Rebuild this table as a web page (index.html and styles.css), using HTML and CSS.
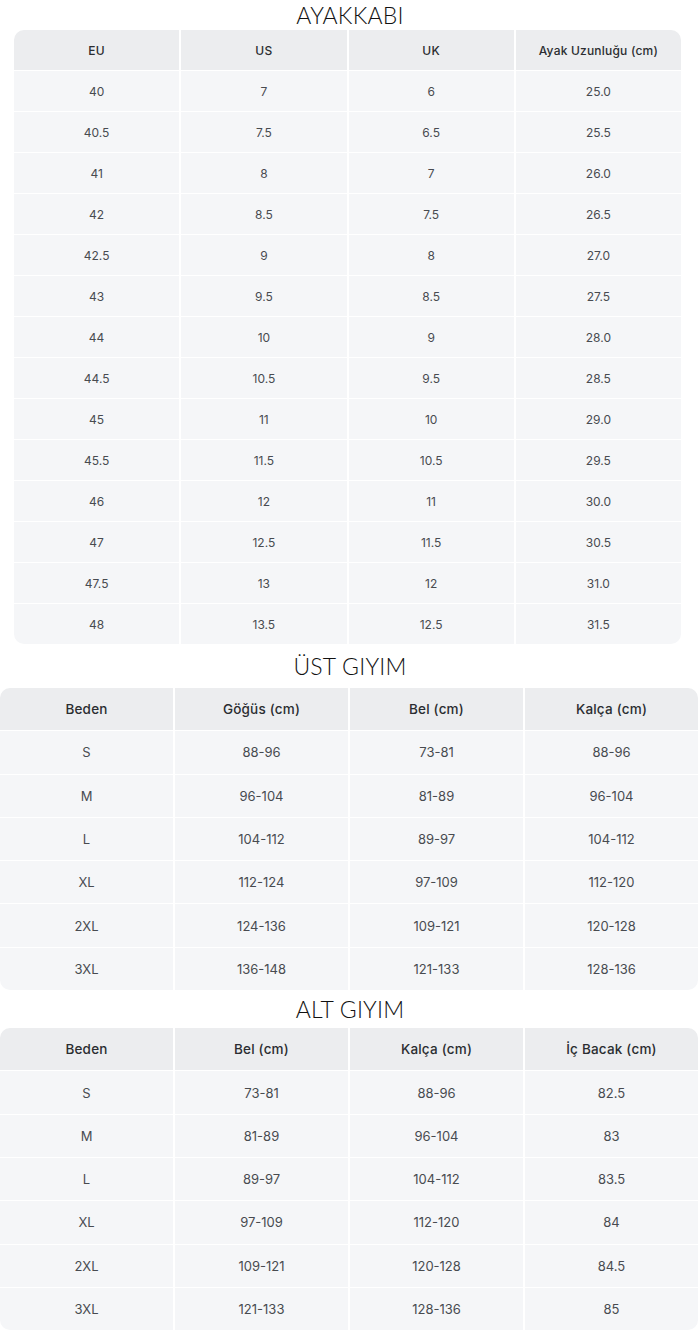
FILE: index.html
```html
<!DOCTYPE html>
<html lang="tr">
<head>
<meta charset="utf-8">
<title>Beden Tablosu</title>
<link rel="stylesheet" href="styles.css">
</head>
<body>
<section class="block block-shoes">
  <h2 class="title title-first">AYAKKABI</h2>
  <div class="grid grid-shoes">
    <div class="cell head">EU</div><div class="cell head">US</div><div class="cell head">UK</div><div class="cell head">Ayak Uzunluğu (cm)</div>
    <div class="cell">40</div><div class="cell">7</div><div class="cell">6</div><div class="cell">25.0</div>
    <div class="cell">40.5</div><div class="cell">7.5</div><div class="cell">6.5</div><div class="cell">25.5</div>
    <div class="cell">41</div><div class="cell">8</div><div class="cell">7</div><div class="cell">26.0</div>
    <div class="cell">42</div><div class="cell">8.5</div><div class="cell">7.5</div><div class="cell">26.5</div>
    <div class="cell">42.5</div><div class="cell">9</div><div class="cell">8</div><div class="cell">27.0</div>
    <div class="cell">43</div><div class="cell">9.5</div><div class="cell">8.5</div><div class="cell">27.5</div>
    <div class="cell">44</div><div class="cell">10</div><div class="cell">9</div><div class="cell">28.0</div>
    <div class="cell">44.5</div><div class="cell">10.5</div><div class="cell">9.5</div><div class="cell">28.5</div>
    <div class="cell">45</div><div class="cell">11</div><div class="cell">10</div><div class="cell">29.0</div>
    <div class="cell">45.5</div><div class="cell">11.5</div><div class="cell">10.5</div><div class="cell">29.5</div>
    <div class="cell">46</div><div class="cell">12</div><div class="cell">11</div><div class="cell">30.0</div>
    <div class="cell">47</div><div class="cell">12.5</div><div class="cell">11.5</div><div class="cell">30.5</div>
    <div class="cell">47.5</div><div class="cell">13</div><div class="cell">12</div><div class="cell">31.0</div>
    <div class="cell">48</div><div class="cell">13.5</div><div class="cell">12.5</div><div class="cell">31.5</div>
  </div>
</section>

<section class="block block-wide">
  <h2 class="title">ÜST GIYIM</h2>
  <div class="grid grid-wide">
    <div class="cell head">Beden</div><div class="cell head">Göğüs (cm)</div><div class="cell head">Bel (cm)</div><div class="cell head">Kalça (cm)</div>
    <div class="cell">S</div><div class="cell">88-96</div><div class="cell">73-81</div><div class="cell">88-96</div>
    <div class="cell">M</div><div class="cell">96-104</div><div class="cell">81-89</div><div class="cell">96-104</div>
    <div class="cell">L</div><div class="cell">104-112</div><div class="cell">89-97</div><div class="cell">104-112</div>
    <div class="cell">XL</div><div class="cell">112-124</div><div class="cell">97-109</div><div class="cell">112-120</div>
    <div class="cell">2XL</div><div class="cell">124-136</div><div class="cell">109-121</div><div class="cell">120-128</div>
    <div class="cell">3XL</div><div class="cell">136-148</div><div class="cell">121-133</div><div class="cell">128-136</div>
  </div>
</section>

<section class="block block-wide">
  <h2 class="title title-last">ALT GIYIM</h2>
  <div class="grid grid-wide">
    <div class="cell head">Beden</div><div class="cell head">Bel (cm)</div><div class="cell head">Kalça (cm)</div><div class="cell head">İç Bacak (cm)</div>
    <div class="cell">S</div><div class="cell">73-81</div><div class="cell">88-96</div><div class="cell">82.5</div>
    <div class="cell">M</div><div class="cell">81-89</div><div class="cell">96-104</div><div class="cell">83</div>
    <div class="cell">L</div><div class="cell">89-97</div><div class="cell">104-112</div><div class="cell">83.5</div>
    <div class="cell">XL</div><div class="cell">97-109</div><div class="cell">112-120</div><div class="cell">84</div>
    <div class="cell">2XL</div><div class="cell">109-121</div><div class="cell">120-128</div><div class="cell">84.5</div>
    <div class="cell">3XL</div><div class="cell">121-133</div><div class="cell">128-136</div><div class="cell">85</div>
  </div>
</section>
</body>
</html>
```

FILE: styles.css
```css
html, body {
  margin: 0;
  padding: 0;
  background: #ffffff;
}

body {
  width: 700px;
  font-family: "Inter", "Noto Sans", "Liberation Sans", sans-serif;
  color: #3f4247;
}

.block {
  display: flex;
  flex-direction: column;
}

.title {
  margin: 0;
  height: 44px;
  display: flex;
  align-items: center;
  justify-content: center;
  font-family: "Lato", "Open Sans", sans-serif;
  font-weight: 300;
  font-size: 23px;
  letter-spacing: 0.2px;
  color: #111111;
}

.title-first {
  height: 30px;
}

.title-last {
  height: 38px;
}

.grid {
  display: grid;
  grid-template-columns: repeat(4, 1fr);
  column-gap: 2px;
  row-gap: 1px;
  background: #ffffff;
  border-radius: 10px;
  overflow: hidden;
}

.grid-shoes {
  margin: 0 19px 0 14px;
  grid-auto-rows: 40px;
}

.grid-wide {
  margin: 0 2px 0 0;
  grid-auto-rows: 42.3px;
}

.cell {
  display: flex;
  align-items: center;
  justify-content: center;
  background: #f5f6f8;
  font-size: 12px;
  color: #484b50;
}

.cell.head {
  background: #ecedef;
  font-weight: 500;
  color: #2b2d31;
  letter-spacing: 0.2px;
}

.grid-shoes .cell.head {
  font-size: 12px;
}

.grid-wide .cell {
  font-size: 13px;
}

.grid-wide .cell.head {
  font-size: 13.5px;
}
```
